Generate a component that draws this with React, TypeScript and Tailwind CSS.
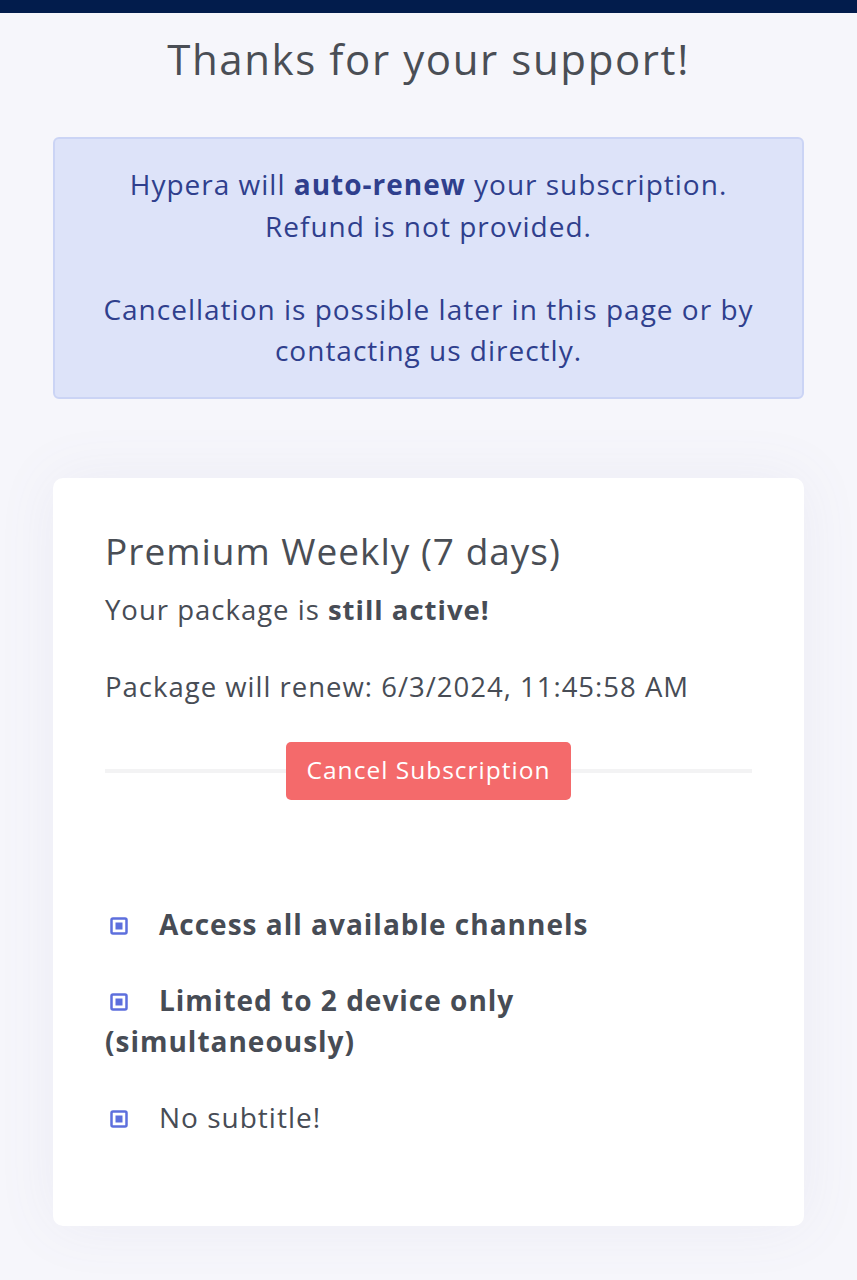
const features = [
  { text: 'Access all available channels', bold: true },
  { text: 'Limited to 2 device only (simultaneously)', bold: true },
  { text: 'No subtitle!', bold: false },
]

function BulletIcon() {
  return (
    <svg width="18" height="18" viewBox="0 0 18 18" className="inline-block align-baseline">
      <rect x="1.5" y="1.5" width="15" height="15" rx="1.5" fill="none" stroke="#5d6fdd" strokeWidth="2.5" />
      <rect x="5.5" y="5.5" width="7" height="7" fill="#5d6fdd" />
    </svg>
  )
}

export default function App() {
  return (
    <div className="min-h-screen bg-[#f6f6fb] pb-12 font-['Open_Sans',sans-serif] tracking-[1px] text-[#474c55]">
      <div className="h-[13px] bg-[#021c4c]" />

      <h1 className="mt-[20px] text-center text-[42px] leading-[52px] tracking-[1.6px] text-[#4a4e55]">
        Thanks for your support!
      </h1>

      {/* Notice */}
      <div className="mx-[53px] mt-[52px] rounded-md border-2 border-[#cbd4f5] bg-[#dde3f9] px-8 py-[25px] text-center text-[28px] leading-[41.5px] text-[#2f3f8d]">
        <p>
          Hypera will <span className="font-bold">auto-renew</span> your subscription.
          <br />
          Refund is not provided.
        </p>
        <p className="mt-[41.5px]">
          Cancellation is possible later in this page or by contacting us directly.
        </p>
      </div>

      {/* Package card */}
      <div className="mx-[53px] mt-[79px] rounded-[10px] bg-white px-[52px] pt-[50px] pb-[88px] shadow-[0_0_60px_rgba(120,120,170,0.08)]">
        <h2 className="text-[37px] leading-[46px] text-[#4a4e55]">Premium Weekly (7 days)</h2>
        <p className="mt-[16px] text-[27.5px] leading-[40px]">
          Your package is <span className="font-bold">still active!</span>
        </p>
        <p className="mt-[37px] text-[27.5px] leading-[40px]">Package will renew: 6/3/2024, 11:45:58 AM</p>

        <div className="mt-[35px] flex items-center">
          <div className="h-[4px] flex-1 bg-[#f3f3f4]" />
          <button className="h-[58px] rounded-[5px] bg-[#f46a6b] px-[21px] text-[24.5px] text-white">
            Cancel Subscription
          </button>
          <div className="h-[4px] flex-1 bg-[#f3f3f4]" />
        </div>

        <ul className="mt-[104px] flex flex-col gap-[35px] text-[28px] leading-[41px]">
          {features.map((f) => (
            <li key={f.text} className={f.bold ? 'font-bold' : ''}>
              <span className="ml-[5px] mr-[31px]">
                <BulletIcon />
              </span>
              {f.text}
            </li>
          ))}
        </ul>
      </div>
    </div>
  )
}
